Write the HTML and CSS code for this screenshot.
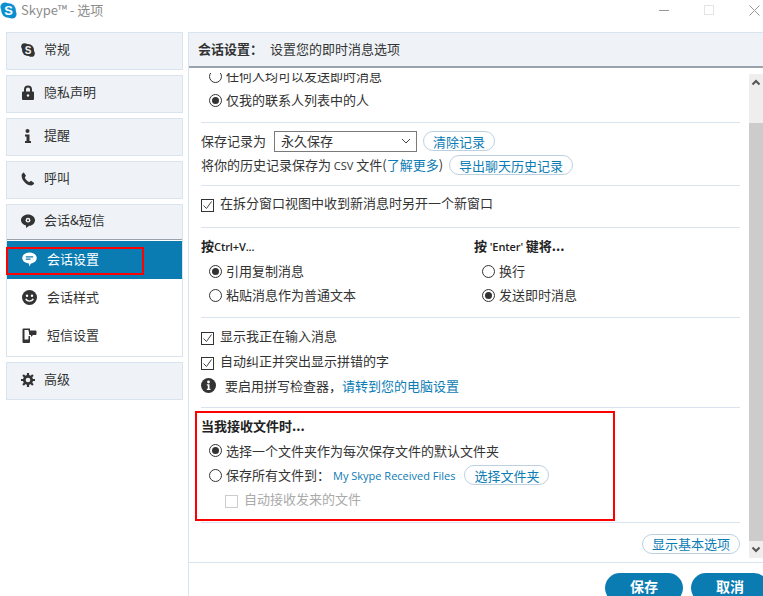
FILE: index.html
```html
<!DOCTYPE html>
<html lang="zh-CN">
<head>
<meta charset="utf-8">
<title>Skype - 选项</title>
<link rel="stylesheet" href="styles.css">
</head>
<body>
<div class="window">
  <header class="titlebar">
    <svg class="logo" width="17" height="17" viewBox="0 0 17 17"><circle cx="5" cy="5" r="4.6" fill="#0b8fd0"/><circle cx="12" cy="12" r="4.6" fill="#0b8fd0"/><circle cx="8.5" cy="8.5" r="7.3" fill="#0b8fd0"/><text x="8.5" y="13" text-anchor="middle" class="logo-s">S</text></svg>
    <span class="title">Skype™ - 选项</span>
    <div class="winbtns">
      <svg width="10" height="10" viewBox="0 0 10 10"><path d="M0 5.5h10" stroke="#999" fill="none"/></svg>
      <svg width="10" height="10" viewBox="0 0 10 10"><rect x=".5" y=".5" width="9" height="9" stroke="#e4e4e4" fill="none"/></svg>
      <svg width="11" height="11" viewBox="0 0 11 11"><path d="M.5.5l10 10M10.500.5l-10 10" stroke="#999" fill="none"/></svg>
    </div>
  </header>
  <div class="columns">
    <nav class="sidebar">
      <a class="card"><svg class="ic" width="14" height="14" viewBox="0 0 14 14"><circle cx="3.600" cy="3.600" r="3.400" fill="#333"/><circle cx="10.400" cy="10.400" r="3.400" fill="#333"/><circle cx="7" cy="7" r="6" fill="#333"/><text x="7" y="10.500" text-anchor="middle" class="ic-s">S</text></svg>常规</a>
      <a class="card"><svg class="ic" width="14" height="15" viewBox="0 0 14 15"><path d="M2 6.500h10a1 1 0 0 1 1 1V14a1 1 0 0 1-1 1H2a1 1 0 0 1-1-1V7.500a1 1 0 0 1 1-1z" fill="#333"/><path d="M4 7V4.500a3 3 0 0 1 6 0V7" stroke="#333" stroke-width="2" fill="none"/><circle cx="7" cy="10.500" r="1.200" fill="#eff3f8"/></svg>隐私声明</a>
      <a class="card"><svg class="ic" width="14" height="14" viewBox="0 0 14 14"><circle cx="6.500" cy="2" r="2" fill="#333"/><path d="M4 5.500h4.500V12H10v2H4v-2h1.500V7.500H4z" fill="#333"/></svg>提醒</a>
      <a class="card"><svg class="ic" width="14" height="14" viewBox="0 0 14 14"><path d="M2.800.6L5 3.800 3.800 5.400c.6 2 2.600 4 4.600 4.600l1.600-1.200 3.200 2.300c-.5 1.300-1.500 2.300-2.700 2.300C5.600 13.400.6 8.300.6 3.400.6 2.200 1.500 1.100 2.800.6z" fill="#333"/></svg>呼叫</a>
      <div class="group">
        <a class="card card-open"><svg class="ic" width="14" height="14" viewBox="0 0 14 14"><path d="M7 .5c3.900 0 7 2.500 7 5.700 0 3-2.500 5.300-5.800 5.600L5 14v-2.500C2.100 10.800 0 8.700 0 6.200 0 3 3.100.5 7 .5z" fill="#333"/><circle cx="7" cy="6.200" r="2.400" fill="#eff3f8"/><circle cx="7" cy="6.200" r="1" fill="#333"/></svg>会话&amp;短信</a>
        <a class="sub sub-active"><svg class="ic" width="15" height="15" viewBox="0 0 15 15"><path d="M7.500.5c4 0 7.200 2.400 7.200 5.500s-2.600 5-5.700 5.400L7 14.500V11.400C3 11 .3 9 .3 6 .3 2.900 3.500.5 7.500.5z" fill="#fff"/><path d="M3.800 4.800h7.400M3.800 7.200h4.700" stroke="#0a7cb2" stroke-width="1.200"/></svg>会话设置</a>
        <a class="sub"><svg class="ic" width="15" height="15" viewBox="0 0 15 15"><circle cx="7.500" cy="7.500" r="7.500" fill="#333"/><circle cx="5" cy="5.800" r="1.200" fill="#fff"/><circle cx="10" cy="5.800" r="1.200" fill="#fff"/><path d="M3.800 8.800c1 3 6.400 3 7.400 0" stroke="#fff" stroke-width="1.300" fill="none"/></svg>会话样式</a>
        <a class="sub"><svg class="ic" width="15" height="15" viewBox="0 0 15 15"><path d="M.5 1.500a1 1 0 0 1 1-1H8v3H6.500V2h-4v9.500h4V8H8v6a1 1 0 0 1-1 1H1.500a1 1 0 0 1-1-1z" fill="#333"/><path d="M7 2.500h6.500a1 1 0 0 1 1 1V6a1 1 0 0 1-1 1H11l-2 2V7H8a1 1 0 0 1-1-1z" fill="#333"/></svg>短信设置</a>
      </div>
      <a class="card"><svg class="ic" width="14" height="14" viewBox="0 0 14 14"><circle cx="7" cy="7" r="3.800" fill="none" stroke="#333" stroke-width="2.600"/><path d="M7 0v14M0 7h14M2.050 2.050l9.900 9.900M11.950 2.050l-9.900 9.900" stroke="#333" stroke-width="2.200"/><circle cx="7" cy="7" r="2.300" fill="#eff3f8"/></svg>高级</a>
    </nav>
    <main class="main">
      <div class="main-head"><b>会话设置：</b>设置您的即时消息选项</div>
      <div class="main-body">
        <div class="content">
          <section class="sec sec-1">
            <div class="row radio-row"><i class="radio"></i>任何人均可以发送即时消息</div>
            <div class="row radio-row"><i class="radio on"></i>仅我的联系人列表中的人</div>
          </section>
          <section class="sec sec-2">
            <div class="row">保存记录为
              <div class="select">永久保存<svg width="10" height="6" viewBox="0 0 10 6"><path d="M1 1l4 4 4-4" stroke="#444" fill="none"/></svg></div>
              <a class="pill">清除记录</a>
            </div>
            <div class="row"><span>将你的历史记录保存为<span class="latin"> CSV </span>文件(<a class="link">了解更多</a>)</span>
              <a class="pill pill-export">导出聊天历史记录</a>
            </div>
          </section>
          <section class="sec sec-3">
            <div class="row"><i class="check"><svg width="11" height="11" viewBox="0 0 11 11"><path d="M1.500 5.500l3 3 5-7" stroke="#444" fill="none"/></svg></i>在拆分窗口视图中收到新消息时另开一个新窗口</div>
          </section>
          <section class="sec sec-4">
            <div class="col col-left">
              <div class="row heading"><span>按<span class="narrow">Ctrl+V...</span></span></div>
              <div class="row radio-row"><i class="radio on"></i>引用复制消息</div>
              <div class="row radio-row"><i class="radio"></i>粘贴消息作为普通文本</div>
            </div>
            <div class="col">
              <div class="row heading"><span>按<span class="narrow">&nbsp;'Enter'&nbsp;</span>键将...</span></div>
              <div class="row radio-row"><i class="radio"></i>换行</div>
              <div class="row radio-row"><i class="radio on"></i>发送即时消息</div>
            </div>
          </section>
          <section class="sec sec-5">
            <div class="row"><i class="check"><svg width="11" height="11" viewBox="0 0 11 11"><path d="M1.500 5.500l3 3 5-7" stroke="#444" fill="none"/></svg></i>显示我正在输入消息</div>
            <div class="row"><i class="check"><svg width="11" height="11" viewBox="0 0 11 11"><path d="M1.500 5.500l3 3 5-7" stroke="#444" fill="none"/></svg></i>自动纠正并突出显示拼错的字</div>
            <div class="row"><svg class="info" width="15" height="15" viewBox="0 0 15 15"><circle cx="7.500" cy="7.500" r="7.500" fill="#333"/><circle cx="7.500" cy="4" r="1.400" fill="#fff"/><path d="M5.800 6.300h2.700v4.400h1v1.300H5.800v-1.300h1V7.600h-1z" fill="#fff"/></svg>要启用拼写检查器，<a class="link">请转到您的电脑设置</a></div>
          </section>
          <section class="sec sec-6">
            <div class="row heading">当我接收文件时...</div>
            <div class="row radio-row"><i class="radio on"></i>选择一个文件夹作为每次保存文件的默认文件夹</div>
            <div class="row radio-row"><i class="radio"></i>保存所有文件到：<a class="link path">My Skype Received Files</a><a class="pill pill-folder">选择文件夹</a></div>
            <div class="row row-off"><i class="check check-off"></i>自动接收发来的文件</div>
          </section>
          <div class="more"><a class="pill">显示基本选项</a></div>
        </div>
        <div class="scrollbar">
          <svg class="arrow" width="14" height="17" viewBox="0 0 14 17"><path d="M3.500 10.500L7 7l3.500 3.500" stroke="#555" stroke-width="2" fill="none"/></svg>
          <div class="track-gap"></div>
          <div class="thumb"></div>
          <svg class="arrow" width="14" height="17" viewBox="0 0 14 17"><path d="M3.500 6.500L7 10l3.500-3.500" stroke="#555" stroke-width="2" fill="none"/></svg>
        </div>
      </div>
      <footer class="footer"><a class="action">保存</a><a class="action">取消</a></footer>
    </main>
  </div>
  <div class="mark mark-nav"></div>
  <div class="mark mark-files"></div>
</div>
</body>
</html>
```
FILE: styles.css
```css
* { box-sizing: border-box; }
html, body { margin: 0; height: 100%; overflow: hidden; background: #fff; }
.window {
  position: relative;
  width: 763px;
  height: 596px;
  overflow: hidden;
  font: 13px/24px "Noto Sans CJK SC", "Liberation Sans", sans-serif;
  color: #333;
}
.titlebar { height: 32px; display: flex; align-items: flex-start; padding-top: 1px; }
.logo { margin-top: 1px; flex: none; }
.logo-s { font: bold 13px "Liberation Sans", sans-serif; fill: #fff; }
.ic-s { font: bold 10px "Liberation Sans", sans-serif; fill: #eff3f8; }
.title { margin-left: 4px; color: #8c8c8c; line-height: 18px; font-size: 13px; }
.winbtns { margin-left: auto; display: flex; gap: 35px; padding: 4px 3px 0 0; }
.columns { display: flex; height: 564px; padding-left: 6px; }
.sidebar { width: 177px; flex: none; display: flex; flex-direction: column; gap: 5px; }
.card {
  height: 38px;
  flex: none;
  display: flex;
  align-items: center;
  padding: 0 0 5px 14px;
  background: #eff3f8;
  border: 1px solid #d9e4ee;
}
.ic { flex: none; margin: 2px 9px 0 0; }
.group { border: 1px solid #d9e4ee; height: 153px; flex: none; }
.card-open { border: 0; border-bottom: 1px solid #9aa3ab; height: 35px; margin-bottom: 1px; padding-left: 14px; padding-bottom: 4px; }
.sub { height: 38px; display: flex; align-items: center; padding: 0 0 3px 15px; }
.sub .ic { margin-right: 10px; }
.sub-active { background: #0a7cb2; color: #fff; }
.main { margin-left: 5px; flex: 1; min-width: 0; display: flex; flex-direction: column; border-left: 1px solid #d9e4ee; }
.main-head {
  height: 36px;
  flex: none;
  background: #eff3f8;
  border-top: 1px solid #d9e4ee;
  border-bottom: 2px solid #9aa3ab;
  padding-left: 9px;
  line-height: 31px;
  color: #333;
}
.main-head b { margin-right: 7px; }
.main-body { flex: 1; display: flex; min-height: 0; border-bottom: 1px solid #d9e4ee; }
.content { flex: 1; min-width: 0; margin: 5px 9px 0 12px; overflow: hidden; }
.sec { border-bottom: 1px solid #d9e4ee; }
.row { height: 24px; display: flex; align-items: center; white-space: nowrap; }
.radio-row { padding-left: 8px; }
.sec-1 { margin-top: -9px; height: 59px; }
.sec-2 { padding-top: 6px; height: 63px; }
.sec-3 { padding-top: 5px; height: 42px; }
.sec-4 { display: flex; padding-top: 6px; height: 90px; }
.sec-4 .heading { height: 25px; padding-bottom: 1px; }
.col-left { width: 273px; }
.sec-5 { padding-top: 5px; height: 90px; }
.sec-5 .row { height: 25px; }
.sec-6 { padding-top: 6px; height: 115px; }
.sec-6 .row { height: 24.500px; }
.sec-6 .row-off { height: 23px; }
.heading { font-weight: 700; color: #222; }
.narrow { font-family: "Open Sans", "Liberation Sans", sans-serif; font-size: 11px; font-weight: 600; letter-spacing: -.1px; }
.latin { font-family: "Open Sans", "Liberation Sans", sans-serif; font-size: 11px; }
.radio {
  width: 13px; height: 13px; flex: none; margin-right: 4px;
  border: 1px solid #333; border-radius: 50%; background: #fff;
  display: flex; align-items: center; justify-content: center;
}
.radio.on::before { content: ""; width: 7px; height: 7px; border-radius: 50%; background: #333; }
.check { width: 13px; height: 13px; flex: none; margin-right: 6px; margin-top: 5px; border: 1px solid #333; display: flex; align-items: center; justify-content: center; }
.check-off { border-color: #ccc; margin-left: 24px; }
.row-off { color: #aaa; }
.info { margin-right: 9px; }
.link { color: #0c7cb4; }
.path { font: 11px "Open Sans", "Liberation Sans", sans-serif; margin-left: 3px; }
.select {
  width: 143px; height: 21px; flex: none; margin-left: 8px;
  border: 1px solid #7a7a7a; padding: 0 5px 0 6px;
  display: flex; align-items: center; justify-content: space-between;
  background: #fff;
}
.pill {
  height: 20px; padding: 0 9px; flex: none; margin-left: 6px;
  border: 1px solid #bdd0df; border-radius: 10px;
  color: #0c7cb4; line-height: 17px; display: inline-flex; align-items: center; background: #fff;
}
.pill-export { margin-left: 6px; }
.pill-folder { margin-left: 9px; }
.more { height: 41px; display: flex; align-items: center; justify-content: flex-end; }
.scrollbar { width: 14px; flex: none; margin-top: 6px; margin-bottom: 4px; background: #eee; display: flex; flex-direction: column; }
.arrow { flex: none; }
.track-gap { height: 32px; flex: none; }
.thumb { flex: 1; background: #ccc; }
.footer { flex: none; height: 33px; display: flex; justify-content: flex-end; gap: 8px; padding-top: 10px; margin-right: -6px; }
.action {
  width: 78px; height: 30px; flex: none; padding-bottom: 5px;
  background: #0a7cb2; color: #fff; font-size: 14px; font-weight: 700; border-radius: 15px;
  display: flex; align-items: center; justify-content: center;
}
.mark { position: absolute; border: 2px solid #f00; pointer-events: none; }
.mark-nav { left: 6px; top: 247px; width: 138px; height: 28px; }
.mark-files { left: 195px; top: 411px; width: 420px; height: 110px; }
```
